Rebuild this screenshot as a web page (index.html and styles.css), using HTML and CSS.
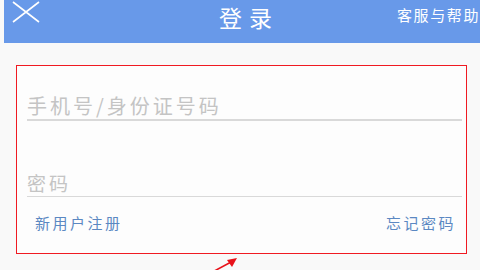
FILE: index.html
```html
<!DOCTYPE html>
<html lang="zh-CN">
<head>
    <meta charset="UTF-8">
    <title>登录</title>
    <link rel="stylesheet" href="styles.css">
</head>
<body>
    <div class="header">
        <div class="close">
            <svg width="28" height="22" viewBox="0 0 28 22">
                <path d="M1 1 L27 21 M27 1 L1 21" stroke="#fff" stroke-width="1.6" fill="none"/>
            </svg>
        </div>
        <div class="title">登录</div>
        <div class="help">客服与帮助</div>
    </div>

    <div class="form">
        <div class="field phone">手机号/身份证号码</div>
        <div class="field pass">密码</div>
        <div class="links">
            <span>新用户注册</span>
            <span>忘记密码</span>
        </div>
        <svg class="arrow" width="36" height="20" viewBox="0 0 36 20">
            <path d="M2 19 L30 4" stroke="#e8121a" stroke-width="1.6" fill="none"/>
            <path d="M34 1 L24 3 L29 10 Z" fill="#e8121a"/>
        </svg>
    </div>
</body>
</html>
```

FILE: styles.css
```css
html, body {
    margin: 0;
    padding: 0;
    height: 100%;
    background: #f9f9f9;
    font-family: "Noto Sans CJK SC", "Noto Sans", sans-serif;
    overflow: hidden;
}
.header {
    margin-left: 4px;
    height: 43px;
    background: #6899e9;
    display: grid;
    grid-template-columns: 1fr auto 1fr;
    align-items: start;
    color: #fff;
    white-space: nowrap;
}
.close {
    padding: 1px 0 0 8px;
    line-height: 0;
}
.title {
    font-size: 23px;
    letter-spacing: 7px;
    line-height: 34px;
    padding-left: 14px;
}
.help {
    font-size: 15px;
    letter-spacing: 1.6px;
    line-height: 22px;
    padding-top: 4px;
    justify-self: end;
}
.form {
    position: relative;
    margin: 22px 13px 0 16px;
    height: 187px;
    border: 1.5px solid #f01a22;
    background: #fdfdfd;
    padding: 0 4px 0 10px;
}
.field {
    color: #c4c4c4;
    border-bottom: 2px solid #d9d9d9;
    letter-spacing: 3px;
}
.phone {
    font-size: 20px;
    line-height: 27px;
    padding-top: 26px;
    margin-bottom: 48px;
}
.pass {
    font-size: 19px;
    line-height: 27px;
    border-bottom-width: 1.5px;
}
.links {
    display: flex;
    justify-content: space-between;
    padding: 15px 6px 0 8px;
    font-size: 15px;
    letter-spacing: 2.5px;
    color: #5b88c2;
}
.arrow {
    position: absolute;
    left: 186px;
    bottom: -24px;
}
```
